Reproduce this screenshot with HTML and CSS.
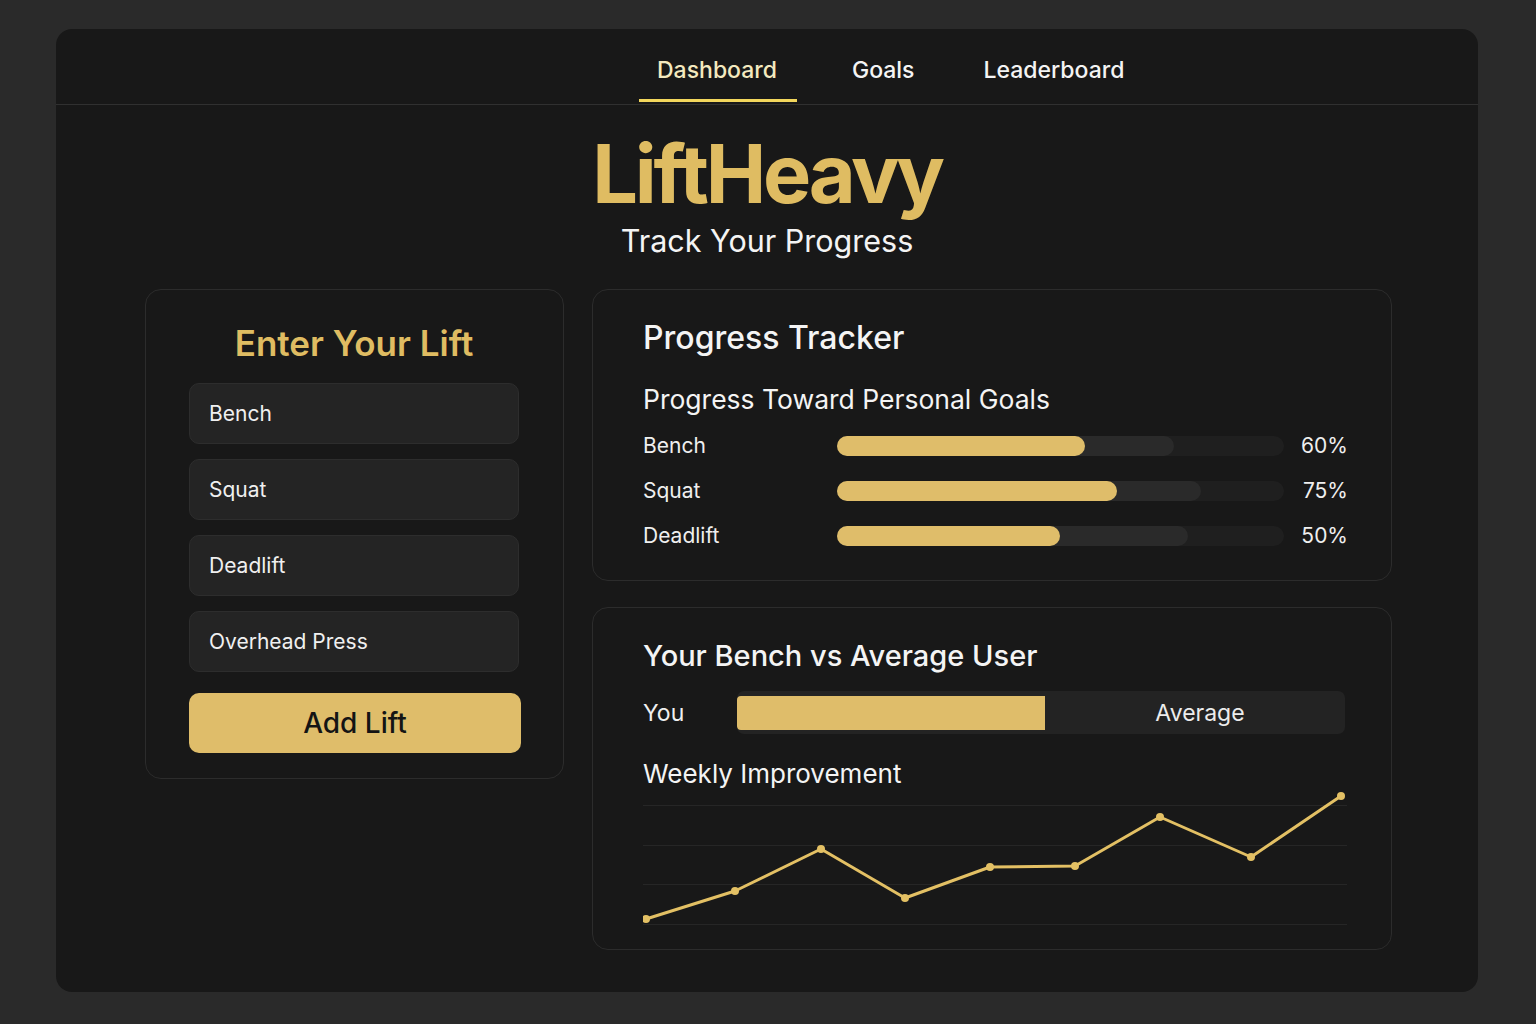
FILE: index.html
```html
<!DOCTYPE html>
<html lang="en">
<head>
<meta charset="utf-8">
<title>LiftHeavy</title>
<link rel="stylesheet" href="styles.css">
</head>
<body>
<div class="window">
  <nav class="nav">
    <a class="nav-item active">Dashboard</a>
    <a class="nav-item nav-tight">Goals</a>
    <a class="nav-item">Leaderboard</a>
  </nav>
  <header class="hero">
    <h1 class="brand">LiftHeavy</h1>
    <p class="tagline">Track Your Progress</p>
  </header>
  <main class="content">
    <section class="card entry">
      <h2 class="entry-title">Enter Your Lift</h2>
      <div class="field">Bench</div>
      <div class="field">Squat</div>
      <div class="field">Deadlift</div>
      <div class="field">Overhead Press</div>
      <button class="add-btn">Add Lift</button>
    </section>
    <div class="right-col">
      <section class="card tracker">
        <h2 class="card-title">Progress Tracker</h2>
        <h3 class="sub-title">Progress Toward Personal Goals</h3>
        <div class="goal-row">
          <span class="goal-label">Bench</span>
          <div class="track">
            <div class="track-mid" style="width:75.4%"></div>
            <div class="track-fill" style="width:55.5%"></div>
          </div>
          <span class="goal-pct">60%</span>
        </div>
        <div class="goal-row">
          <span class="goal-label">Squat</span>
          <div class="track">
            <div class="track-mid" style="width:81.4%"></div>
            <div class="track-fill" style="width:62.6%"></div>
          </div>
          <span class="goal-pct">75%</span>
        </div>
        <div class="goal-row">
          <span class="goal-label">Deadlift</span>
          <div class="track">
            <div class="track-mid" style="width:78.5%"></div>
            <div class="track-fill" style="width:49.9%"></div>
          </div>
          <span class="goal-pct">50%</span>
        </div>
      </section>
      <section class="card compare">
        <h2 class="card-title compare-title">Your Bench vs Average User</h2>
        <div class="compare-row">
          <span class="you-label">You</span>
          <div class="compare-bar">
            <div class="compare-you"></div>
            <div class="compare-avg">Average</div>
          </div>
        </div>
        <h3 class="sub-title weekly">Weekly Improvement</h3>
        <svg class="chart" width="706" height="140" viewBox="0 0 706 140">
          <g stroke="#262626" stroke-width="1">
            <line x1="0" y1="14.5" x2="704" y2="14.5"/>
            <line x1="0" y1="54.5" x2="704" y2="54.5"/>
            <line x1="0" y1="93.5" x2="704" y2="93.5"/>
            <line x1="0" y1="133.5" x2="704" y2="133.5"/>
          </g>
          <polyline fill="none" stroke="#e3c064" stroke-width="3" stroke-linejoin="round" stroke-linecap="round"
            points="3,128 92,100 178,58 262,107 347,76 432,75 517,26 608,66 698,5"/>
          <g fill="#e3c064">
            <circle cx="3" cy="128" r="4"/>
            <circle cx="92" cy="100" r="4"/>
            <circle cx="178" cy="58" r="4"/>
            <circle cx="262" cy="107" r="4"/>
            <circle cx="347" cy="76" r="4"/>
            <circle cx="432" cy="75" r="4"/>
            <circle cx="517" cy="26" r="4"/>
            <circle cx="608" cy="66" r="4"/>
            <circle cx="698" cy="5" r="4"/>
          </g>
        </svg>
      </section>
    </div>
  </main>
</div>
</body>
</html>
```
FILE: styles.css
```css
* { box-sizing: border-box; }
html, body { margin: 0; padding: 0; }
body {
  background: #2a2a2a;
  font-family: Inter, "Noto Sans", "Liberation Sans", sans-serif;
  color: #f2f2f2;
  padding: 29px 58px 32px 56px;
  height: 1024px;
  overflow: hidden;
}
.window {
  width: 1422px;
  height: 963px;
  background: #181818;
  border-radius: 16px;
  overflow: hidden;
}
.nav {
  display: flex;
  gap: 37px;
  padding-left: 583px;
  height: 76px;
  border-bottom: 1px solid #303030;
}
.nav-item {
  font-size: 23px;
  font-weight: 500;
  line-height: 28px;
  padding: 27px 20px 15px 18px;
  border-bottom: 3px solid transparent;
  margin-bottom: 2px;
  color: #f4f4f4;
  height: 73px;
}
.nav-item.nav-tight { padding-right: 14px; }
.nav-item.active {
  color: #f3e9bf;
  border-bottom-color: #f2d65c;
}
.hero {
  text-align: center;
  padding-top: 24px;
}
.brand {
  margin: 0;
  font-size: 81px;
  line-height: 90px;
  font-weight: 700;
  letter-spacing: -3.3px;
  color: #dfbc62;
}
.tagline {
  margin: 2px 0 0;
  font-size: 30.5px;
  line-height: 40px;
  color: #f4f4f4;
}
.content {
  display: flex;
  gap: 28px;
  width: 1247px;
  margin: 28px 0 0 89px;
  align-items: flex-start;
}
.card {
  border: 1px solid #2c2c2c;
  border-radius: 16px;
  background: #181818;
}
.entry {
  width: 419px;
  height: 490px;
  padding: 33px 44px 0 43px;
  display: flex;
  flex-direction: column;
}
.entry-title {
  margin: 0 0 20px;
  text-align: center;
  font-size: 35px;
  line-height: 40px;
  font-weight: 600;
  color: #dfbc62;
}
.field {
  height: 61px;
  background: #242424;
  border: 1px solid #2d2d2d;
  border-radius: 10px;
  font-size: 21px;
  line-height: 59px;
  padding-left: 19px;
  margin-bottom: 15px;
  color: #f0f0f0;
}
.field:nth-of-type(4) { margin-bottom: 21px; }
.add-btn {
  height: 60px;
  width: 332px;
  border: none;
  border-radius: 10px;
  background: #dfbd6a;
  font-family: inherit;
  font-size: 28px;
  font-weight: 500;
  color: #141414;
}
.right-col {
  width: 800px;
  display: flex;
  flex-direction: column;
  gap: 26px;
}
.tracker {
  height: 292px;
  padding: 29px 43px 0 50px;
}
.card-title {
  margin: 0;
  font-size: 32px;
  line-height: 38px;
  font-weight: 500;
  color: #f4f4f4;
}
.sub-title {
  margin: 26px 0 8px;
  font-size: 26.5px;
  line-height: 32px;
  font-weight: 400;
  color: #f4f4f4;
}
.goal-row {
  display: flex;
  align-items: center;
  height: 45px;
}
.goal-label {
  width: 194px;
  font-size: 21px;
  color: #efefef;
}
.track {
  position: relative;
  width: 447px;
  height: 20px;
  border-radius: 10px;
  background: #1f1f1f;
}
.track-mid, .track-fill {
  position: absolute;
  left: 0;
  top: 0;
  height: 20px;
  border-radius: 10px;
}
.track-mid { background: #2a2a2a; }
.track-fill { background: #dfbd6a; }
.goal-pct {
  flex: 1;
  text-align: right;
  font-size: 21px;
  color: #efefef;
}
.compare {
  height: 343px;
  padding: 30px 46px 0 50px;
}
.compare-title {
  font-size: 29px;
  line-height: 36px;
}
.compare-row {
  display: flex;
  align-items: center;
  margin-top: 17px;
  height: 43px;
}
.you-label {
  width: 94px;
  font-size: 23px;
  color: #efefef;
}
.compare-bar {
  display: flex;
  align-items: center;
  width: 608px;
  height: 43px;
  background: #232323;
  border-radius: 7px;
  overflow: hidden;
}
.compare-you {
  width: 308px;
  height: 34px;
  background: #dfbd6a;
  border-radius: 4px 0 0 4px;
}
.compare-avg {
  flex: 1;
  text-align: center;
  font-size: 23px;
  color: #ececec;
  padding-left: 10px;
}
.weekly {
  margin: 23px 0 0;
  font-size: 26px;
  line-height: 34px;
}
.chart {
  display: block;
}
```
